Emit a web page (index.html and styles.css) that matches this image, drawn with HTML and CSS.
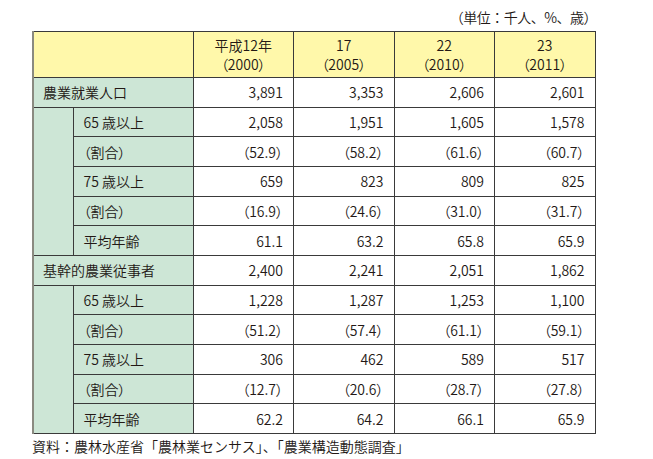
FILE: index.html
```html
<!DOCTYPE html>
<html lang="ja">
<head>
<meta charset="utf-8">
<link rel="stylesheet" href="styles.css">
</head>
<body>
<div class="page">
  <div class="unit">（単位：千人、%、歳）</div>
  <table class="tbl">
    <colgroup>
      <col class="c-indent"><col class="c-label">
      <col class="c-data"><col class="c-data"><col class="c-data"><col class="c-data">
    </colgroup>
    <thead>
      <tr class="head">
        <th colspan="2" class="corner"></th>
        <th>平成12年<br>（2000）</th>
        <th>17<br>（2005）</th>
        <th>22<br>（2010）</th>
        <th>23<br>（2011）</th>
      </tr>
    </thead>
    <tbody>
      <tr>
        <td colspan="2" class="lab top">農業就業人口</td>
        <td>3,891</td><td>3,353</td><td>2,606</td><td>2,601</td>
      </tr>
      <tr class="dot">
        <td rowspan="5" class="indent"></td>
        <td class="lab">65 歳以上</td>
        <td>2,058</td><td>1,951</td><td>1,605</td><td>1,578</td>
      </tr>
      <tr>
        <td class="lab">（割合）</td>
        <td>（52.9）</td><td>（58.2）</td><td>（61.6）</td><td>（60.7）</td>
      </tr>
      <tr class="dot">
        <td class="lab">75 歳以上</td>
        <td>659</td><td>823</td><td>809</td><td>825</td>
      </tr>
      <tr>
        <td class="lab">（割合）</td>
        <td>（16.9）</td><td>（24.6）</td><td>（31.0）</td><td>（31.7）</td>
      </tr>
      <tr>
        <td class="lab">平均年齢</td>
        <td>61.1</td><td>63.2</td><td>65.8</td><td>65.9</td>
      </tr>
      <tr>
        <td colspan="2" class="lab top">基幹的農業従事者</td>
        <td>2,400</td><td>2,241</td><td>2,051</td><td>1,862</td>
      </tr>
      <tr class="dot">
        <td rowspan="5" class="indent"></td>
        <td class="lab">65 歳以上</td>
        <td>1,228</td><td>1,287</td><td>1,253</td><td>1,100</td>
      </tr>
      <tr>
        <td class="lab">（割合）</td>
        <td>（51.2）</td><td>（57.4）</td><td>（61.1）</td><td>（59.1）</td>
      </tr>
      <tr class="dot">
        <td class="lab">75 歳以上</td>
        <td>306</td><td>462</td><td>589</td><td>517</td>
      </tr>
      <tr>
        <td class="lab">（割合）</td>
        <td>（12.7）</td><td>（20.6）</td><td>（28.7）</td><td>（27.8）</td>
      </tr>
      <tr>
        <td class="lab">平均年齢</td>
        <td>62.2</td><td>64.2</td><td>66.1</td><td>65.9</td>
      </tr>
    </tbody>
  </table>
  <div class="source">資料：農林水産省「農林業センサス」、「農業構造動態調査」</div>
</div>
</body>
</html>
```
FILE: styles.css
```css
html, body {
  margin: 0;
  padding: 0;
  background: #ffffff;
}
body {
  font-family: "Noto Sans CJK JP", "Noto Sans", sans-serif;
  font-weight: 350;
  color: #231815;
  font-size: 14px;
}
.page {
  width: 562px;
  padding: 7px 0 0 32px;
}
.unit {
  text-align: right;
  line-height: 20px;
  height: 24px;
  padding-right: 0;
  margin-right: -3px;
  font-size: 14px;
  letter-spacing: -0.5px;
}
.tbl {
  border-collapse: collapse;
  table-layout: fixed;
  width: 562px;
  border-top: 1px solid #231815;
  border-right: 1px solid #231815;
  border-bottom: 1px solid #231815;
  border-left: 2px solid #8a8a80;
}
.c-indent { width: 40px; }
.c-label { width: 120px; }
.c-data { width: 100.5px; }
.tbl th,
.tbl td {
  padding: 0 10px;
  border: 1px solid #3a3a3a;
  height: 29.67px;
  box-sizing: border-box;
  line-height: 18px;
  white-space: nowrap;
  font-feature-settings: "palt";
}
.head th {
  background: #fff8aa;
  font-weight: 350;
  text-align: center;
  height: 46px;
  line-height: 19px;
  padding: 0;
}
.tbl td {
  text-align: right;
  background: #ffffff;
}
.tbl td.lab {
  text-align: left;
  background: #cde6d6;
}
.tbl td.indent {
  background: #cde6d6;
  border-top: none;
  border-bottom: 1px solid #3a3a3a;
}
.tbl td.top {
  padding-left: 9px;
}
.tbl tr.dot td:not(.indent) {
  border-bottom: 1px dotted #555555;
}
.source {
  margin-top: 3px;
  line-height: 18px;
  font-size: 14px;
}
```
